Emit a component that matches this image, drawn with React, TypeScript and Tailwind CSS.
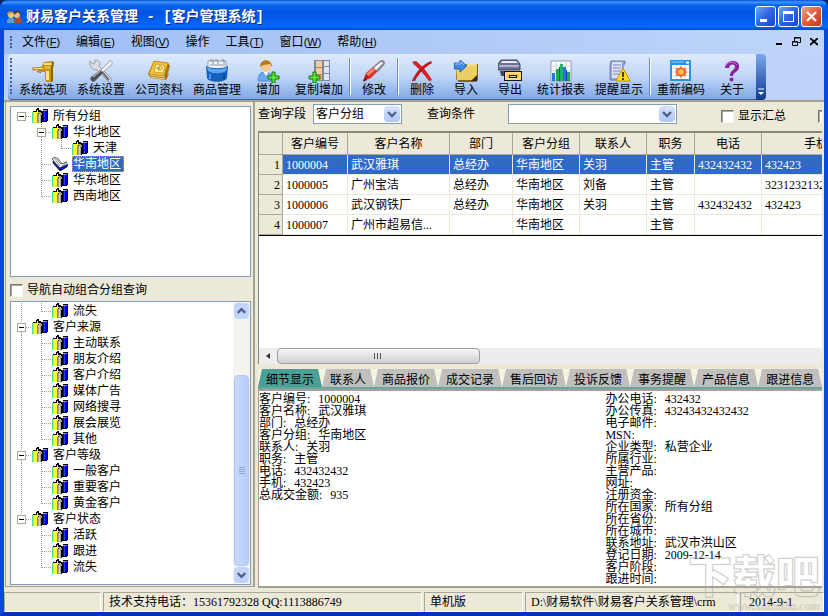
import React, { useState } from 'react';

// ==========================================
// 1. Types
// ==========================================
type Guide = 'blank' | 'line' | 'tee' | 'end' | 'box' | 'boxMid' | 'boxEnd';

interface TreeRow {
    label: string;
    guides: Guide[];
}

interface Customer {
    id: string;
    name: string;
    dept: string;
    group: string;
    contact: string;
    title: string;
    phone: string;
    mobile: string;
}

// ==========================================
// 2. Data
// ==========================================
const MENUS = [
    { label: '文件', key: 'F' },
    { label: '编辑', key: 'E' },
    { label: '视图', key: 'V' },
    { label: '操作', key: '' },
    { label: '工具', key: 'T' },
    { label: '窗口', key: 'W' },
    { label: '帮助', key: 'H' },
];

const GROUP_TREE: TreeRow[] = [
    { label: '所有分组', guides: ['box'] },
    { label: '华北地区', guides: ['blank', 'boxMid'] },
    { label: '天津', guides: ['blank', 'line', 'end'] },
    { label: '华南地区', guides: ['blank', 'tee'] },
    { label: '华东地区', guides: ['blank', 'tee'] },
    { label: '西南地区', guides: ['blank', 'end'] },
];

const NAV_TREE: TreeRow[] = [
    { label: '流失', guides: ['line', 'end'] },
    { label: '客户来源', guides: ['boxMid'] },
    { label: '主动联系', guides: ['line', 'tee'] },
    { label: '朋友介绍', guides: ['line', 'tee'] },
    { label: '客户介绍', guides: ['line', 'tee'] },
    { label: '媒体广告', guides: ['line', 'tee'] },
    { label: '网络搜寻', guides: ['line', 'tee'] },
    { label: '展会展览', guides: ['line', 'tee'] },
    { label: '其他', guides: ['line', 'end'] },
    { label: '客户等级', guides: ['boxMid'] },
    { label: '一般客户', guides: ['line', 'tee'] },
    { label: '重要客户', guides: ['line', 'tee'] },
    { label: '黄金客户', guides: ['line', 'end'] },
    { label: '客户状态', guides: ['boxEnd'] },
    { label: '活跃', guides: ['blank', 'tee'] },
    { label: '跟进', guides: ['blank', 'tee'] },
    { label: '流失', guides: ['blank', 'end'] },
];

const COLUMNS = ['客户编号', '客户名称', '部门', '客户分组', '联系人', '职务', '电话', '手机'];

const CUSTOMERS: Customer[] = [
    { id: '1000004', name: '武汉雅琪', dept: '总经办', group: '华南地区', contact: '关羽', title: '主管', phone: '432432432', mobile: '432423' },
    { id: '1000005', name: '广州宝洁', dept: '总经办', group: '华南地区', contact: '刘备', title: '主管', phone: '', mobile: '32312321323' },
    { id: '1000006', name: '武汉钢铁厂', dept: '总经办', group: '华南地区', contact: '关羽', title: '主管', phone: '432432432', mobile: '432423' },
    { id: '1000007', name: '广州市超易信...', dept: '', group: '华南地区', contact: '', title: '主管', phone: '', mobile: '' },
];

const TABS = ['细节显示', '联系人', '商品报价', '成交记录', '售后回访', '投诉反馈', '事务提醒', '产品信息', '跟进信息'];

const DETAIL_LEFT = [
    ['客户编号', '1000004'],
    ['客户名称', '武汉雅琪'],
    ['部门', '总经办'],
    ['客户分组', '华南地区'],
    ['联系人', '关羽'],
    ['职务', '主管'],
    ['电话', '432432432'],
    ['手机', '432423'],
    ['总成交金额', '935'],
];

const DETAIL_RIGHT = [
    ['办公电话', '432432'],
    ['办公传真', '43243432432432'],
    ['电子邮件', ''],
    ['MSN', ''],
    ['企业类型', '私营企业'],
    ['所属行业', ''],
    ['主营产品', ''],
    ['网址', ''],
    ['注册资金', ''],
    ['所在国家', '所有分组'],
    ['所在省份', ''],
    ['所在城市', ''],
    ['联系地址', '武汉市洪山区'],
    ['登记日期', '2009-12-14'],
    ['客户阶段', ''],
    ['跟进时间', ''],
];

// ==========================================
// 3. Icons
// ==========================================
const Icon = ({ children }: { children: React.ReactNode }) => (
    <svg viewBox="0 0 24 24" className="size-6 shrink-0" aria-hidden="true">
        {children}
    </svg>
);

const OptionsIcon = () => (
    <Icon>
        <path d="M1 9l2-1h7l2-3 1-2 9-1 1 2-1 5v13l-3 1h-4l-1-3v-7h-4l-4-2-4 1z" fill="#c4941a" />
        <path d="M13 4h8v2h-8zM3 9h9v1H3zM15 12h3v9h-3z" fill="#fbe57c" />
        <path d="M13 7h7l-1 3h-5z" fill="#e3b837" />
        <path d="M21 3h2l-1 6v13l-2 1V9z" fill="#8a6208" />
        <path d="M6 12l4 1v1l-4-1z" fill="#7d5a0a" />
    </Icon>
);

const SettingsIcon = () => (
    <Icon>
        <path d="M1 2l3 3 2-1V1c4 0 6 3 4 6l12 12c2 3-1 5-3 3L7 10C4 12 0 8 1 2z" fill="#d9dde2" stroke="#80868e" strokeWidth=".7" />
        <path d="M13 13l7 8" stroke="#6d7278" strokeWidth="2" />
        <path d="M21 1l2 2v3l-2 1-7 6-2-2 7-7z" fill="#eef1f5" stroke="#8a929b" strokeWidth=".7" />
        <path d="M11 11l3 3-8 8c-2 2-6-1-4-4z" fill="#4c5055" />
        <path d="M4 18l7-6" stroke="#b3b8be" strokeWidth="1.4" />
    </Icon>
);

const CompanyIcon = () => (
    <Icon>
        <path d="M7 2l14 2 2 3-4 14-15-2-3-4z" fill="#a87305" />
        <path d="M7 2l14 2-4 13-15-2z" fill="#efc338" stroke="#b88108" strokeWidth=".7" />
        <path d="M9 5l9 2-2 7-9-1z" fill="#fff0a4" stroke="#c18d15" strokeWidth=".7" />
        <path d="M10 10c0-3 5-3 5-1s-4 3-4 1l2-1" fill="none" stroke="#b27a05" />
        <path d="M3 16l15 2M4 18l14 2" stroke="#fff3bd" strokeWidth=".8" />
        <path d="M20 12l2 3-2 4z" fill="#54bc45" />
        <path d="M19 16l2 1-2 3z" fill="#dd3c2a" />
    </Icon>
);

const GoodsIcon = () => (
    <Icon>
        <path d="M3 2h18v10H3z" fill="#eef2f6" stroke="#798896" strokeWidth=".7" />
        <path d="M5 1h3v4M10 1h3v4M16 1h3v4M5 6h15" stroke="#74818e" fill="none" strokeWidth=".8" />
        <path d="M1 7c6 3 16 3 22 0l-1 12c-2 5-18 5-20 0z" fill="#1560bd" />
        <path d="M2 8c6 3 14 3 20 0l-1 4c-5 3-13 3-18 0z" fill="#5ba6ee" />
        <path d="M5 15v5" stroke="#4c9aea" strokeWidth="2" />
        <path d="M19 15v5" stroke="#0b4690" strokeWidth="2" />
    </Icon>
);

const AddIcon = () => (
    <Icon>
        <path d="M2 22c0-6 2-9 7-9s8 3 8 9z" fill="#6aa7ec" stroke="#3573bd" strokeWidth=".6" />
        <path d="M7 12l3 5 3-5z" fill="#fff" />
        <circle cx="10" cy="8" r="5" fill="#f6c88d" />
        <path d="M4 8c0-9 12-9 12 0l-2-3-7 1z" fill="#b8791a" />
        <path d="M16 13h3v4h4v3h-4v4h-3v-4h-4v-3h4z" fill="#5bea35" stroke="#167309" />
    </Icon>
);

const CopyAddIcon = () => (
    <Icon>
        <path d="M7 1h16v21H7z" fill="#83879a" />
        <path d="M9 2h6v6H9zM9 9h6v6H9z" fill="#f6cb98" />
        <path d="M17 2h5v5h-5zM17 8h5v6h-5zM17 15h5v6h-5z" fill="#dfe5f5" />
        <path d="M9 16h6v5H9z" fill="#f4ae64" />
        <path d="M6 13h3v4h4v3H9v4H6v-4H2v-3h4z" fill="#5bea35" stroke="#167309" />
    </Icon>
);

const EditIcon = () => (
    <Icon>
        <path d="M1 22l3-8L18 2c3-2 6 1 4 4L9 19z" fill="#d6382a" />
        <path d="M11 8l7-6c3-2 6 1 4 4l-6 7z" fill="#858c98" />
        <path d="M12 9l7-6 2 1-7 7z" fill="#fff" />
        <path d="M4 15l7-6 2 2-7 6z" fill="#ff8570" />
        <path d="M1 22l3-7 4 4z" fill="#b92419" />
        <path d="M1 23l2-4 2 2z" fill="#40251f" />
    </Icon>
);

const DeleteIcon = () => (
    <Icon>
        <path d="M3 4c7 3 12 9 18 18M21 3C13 7 7 14 3 22" stroke="#8e8da0" strokeWidth="3" fill="none" opacity=".5" />
        <path d="M2 3l4-1c5 4 11 10 16 19l-3 1C14 15 8 9 2 3z" fill="#d81f23" />
        <path d="M21 2l1 2C15 8 9 14 5 22H2C6 13 12 6 21 2z" fill="#c9141c" />
    </Icon>
);

const ImportIcon = () => (
    <Icon>
        <path d="M2 8h8l2-3h12v16l-2 2H5l-3-3z" fill="#7b671e" />
        <path d="M2 8h9l2-3h10v14l-2 2H3z" fill="#e9cd65" />
        <path d="M4 9h8l2-3h8" stroke="#fff2aa" fill="none" />
        <path d="M17 22l6-6v6z" fill="#2e290f" />
        <path d="M0 4h6V1l7 6-7 6v-3H0z" fill="#3f86e7" stroke="#1f55a6" strokeWidth=".8" />
        <path d="M1 5h6V3l3 3" stroke="#9ac9ff" fill="none" />
    </Icon>
);

const ExportIcon = () => (
    <Icon>
        <path d="M3 1h16l3 4v6H0V5z" fill="#717497" stroke="#2d2e49" strokeWidth=".8" />
        <path d="M4 2h14l2 2H3z" fill="#e8eaf6" />
        <path d="M1 7h20" stroke="#c5c9e2" strokeWidth="1.500" />
        <path d="M2 12h6v5H3z" fill="#444560" />
        <path d="M6 12h18v10H6z" fill="#161616" />
        <path d="M7 13h16v8H7z" fill="#ffbd42" />
        <path d="M8 14h14v6H8z" fill="none" stroke="#fff3ce" />
        <path d="M11 16h8v3h-8z" fill="#191919" />
        <path d="M12 17.500h6" stroke="#fff" strokeWidth=".8" />
    </Icon>
);

const ReportIcon = () => (
    <Icon>
        <path d="M2 2h20v20H2z" fill="#fff" stroke="#8f9aa6" />
        <path d="M2 7h20M2 12h20M2 17h20M7 2v20M12 2v20M17 2v20" stroke="#cbd3da" />
        <path d="M3 14h3v8H3zM14 8h3v14h-3z" fill="#2a72dd" />
        <path d="M7 10h3v12H7zM18 13h3v9h-3z" fill="#22a54d" />
        <path d="M11 5h3v17h-3z" fill="#21b26a" />
        <path d="M10 8h1v14h-1zM17 11h1v11h-1z" fill="#144ba0" />
    </Icon>
);

const RemindIcon = () => (
    <Icon>
        <path d="M4 2h14v3l-2 1v15H3V6z" fill="#9aa3d7" stroke="#6670a9" strokeWidth=".8" />
        <path d="M5 3h10v16H5z" fill="#dde1fa" />
        <path d="M6 6h8M6 9h8M6 12h8M6 15h6" stroke="#7c86c2" />
        <path d="M16 9l7 13H9z" fill="#ffe21c" stroke="#c39500" />
        <path d="M16 13v5M16 19v2" stroke="#1c1700" strokeWidth="1.600" />
    </Icon>
);

const RecodeIcon = () => (
    <Icon>
        <path d="M1 1h21v21H1z" fill="#2595e9" />
        <path d="M3 6h17v14H3z" fill="#fff" />
        <path d="M2 3h13" stroke="#8ed3ff" />
        <path d="M17 3.500h3" stroke="#fff" strokeWidth="2" />
        <path d="M3 9h17M3 13h17M3 17h17M7 6v14M12 6v14M16 6v14" stroke="#bfd1e4" strokeWidth=".7" />
        <path d="M12 7l2 2h3v3l1 1-1 1v3h-3l-2 2-2-2H7v-3l-1-1 1-1V9h3z" fill="#f2733d" />
        <circle cx="12" cy="13" r="2.500" fill="#ffca45" />
    </Icon>
);

const AboutIcon = () => (
    <Icon>
        <path d="M5 9c0-9 15-9 14-1 0 5-6 5-6 9h-3c0-6 5-6 5-9 0-4-6-3-6 1z" fill="#8a22a0" />
        <path d="M6 7c1-5 9-5 11-1" stroke="#cf74dd" fill="none" />
        <circle cx="11.500" cy="20.500" r="2" fill="#8a22a0" />
    </Icon>
);

const BooksIcon = () => (
    <svg viewBox="0 0 16 16" className="size-4 shrink-0" shapeRendering="crispEdges" aria-hidden="true">
        <path d="M1 3h3V1h1V0h2v2h2v1h2V1h5v12h-1v1h-5v1H1z" fill="#000" />
        <path d="M0 4h1v11H0z" fill="#3fe0a0" />
        <path d="M1 4h1v11H1z" fill="#b9f56c" />
        <path d="M2 4h3V2h1v2h1v1H6v10H2z" fill="#ffff20" />
        <path d="M5 6h1v9H5z" fill="#8d8a50" />
        <path d="M6 6h1V4h2v1h1v2H9v8H6z" fill="#a9a397" />
        <path d="M7 6h1v9H7z" fill="#d6d0c4" />
        <path d="M11 3h4v10h-4z" fill="#0000d8" />
        <path d="M11 2h4v1h-4z" fill="#8f97d8" />
        <path d="M12 3h1v10h-1z" fill="#2a35ff" />
    </svg>
);

const OpenBookIcon = () => (
    <svg viewBox="0 0 16 16" className="size-4 shrink-0" aria-hidden="true">
        <path d="M1 5l7 7 8-4-1 3-7 4-7-8z" fill="#0a1a96" stroke="#000040" strokeWidth=".6" />
        <path d="M0 3l3-2 6 7 6-2-7 6z" fill="#fff" stroke="#222" strokeWidth=".7" />
        <path d="M2 2l6 8M5 1l5 7" stroke="#555" strokeWidth=".7" />
    </svg>
);

const AppIcon = () => (
    <svg viewBox="0 0 16 16" className="size-4 shrink-0" aria-hidden="true">
        <path d="M1 14c0-4 1-5 4-5s4 2 4 5z" fill="#5aa0c8" />
        <path d="M8 14c0-4 1-6 4-6s4 2 4 6z" fill="#b04a28" />
        <circle cx="5" cy="6" r="3" fill="#f4c68e" />
        <path d="M1 6c0-5 7-5 7 0L6 4z" fill="#c49a2a" />
        <circle cx="11" cy="6" r="3" fill="#eab98a" />
        <path d="M8 6c0-6 7-5 7 0l-3-3z" fill="#5a3418" />
    </svg>
);

const Chevron = ({ up = false }: { up?: boolean }) => (
    <svg viewBox="0 0 16 16" className="size-4" aria-hidden="true">
        <path d={up ? 'M4 10l4-4 4 4' : 'M4 6l4 4 4-4'} fill="none" stroke="#4d6185" strokeWidth="2.400" />
    </svg>
);

const TOOLS = [
    { label: '系统选项', icon: <OptionsIcon /> },
    { label: '系统设置', icon: <SettingsIcon /> },
    { label: '公司资料', icon: <CompanyIcon /> },
    { label: '商品管理', icon: <GoodsIcon /> },
    { label: '增加', icon: <AddIcon /> },
    { label: '复制增加', icon: <CopyAddIcon />, split: true },
    { label: '修改', icon: <EditIcon />, split: true },
    { label: '删除', icon: <DeleteIcon /> },
    { label: '导入', icon: <ImportIcon /> },
    { label: '导出', icon: <ExportIcon /> },
    { label: '统计报表', icon: <ReportIcon /> },
    { label: '提醒显示', icon: <RemindIcon />, split: true },
    { label: '重新编码', icon: <RecodeIcon /> },
    { label: '关于', icon: <AboutIcon /> },
];

// ==========================================
// 4. Parts
// ==========================================
const GUIDE_PATHS: Record<Guide, string> = {
    blank: '',
    line: 'M9.5 0v16',
    tee: 'M9.5 0v16M10 8.5h10',
    end: 'M9.5 0v9M10 8.5h10',
    box: 'M14 8.5h6',
    boxMid: 'M9.5 0v4M9.5 13v3M14 8.5h6',
    boxEnd: 'M9.5 0v4M14 8.5h6',
};

const GuideCell = ({ kind }: { kind: Guide }) => (
    <svg viewBox="0 0 20 16" className="h-4 w-5 shrink-0" aria-hidden="true">
        <path d={GUIDE_PATHS[kind]} stroke="#9c9a94" strokeDasharray="1 1" fill="none" />
        {kind.startsWith('box') && (
            <g shapeRendering="crispEdges">
                <path d="M5.5 4.5h8v8h-8z" fill="#fff" stroke="#aca899" />
                <path d="M7 8.5h5" stroke="#000" />
            </g>
        )}
    </svg>
);

interface TreeProps {
    name: string;
    rows: TreeRow[];
    selected?: string;
}

const Tree = ({ name, rows, selected }: TreeProps) => (
    <ul role="tree" aria-label={name} className="min-w-0 flex-1 pt-px pl-px">
        {rows.map((row, i) => {
            const active = row.label === selected;
            return (
                <li key={i} role="treeitem" aria-selected={active} className="flex h-4 items-center">
                    {row.guides.map((g, j) => (
                        <GuideCell key={j} kind={g} />
                    ))}
                    {active ? <OpenBookIcon /> : <BooksIcon />}
                    <span
                        className={
                            active
                                ? 'ml-1 border border-dotted border-[#d8a050] bg-[#316ac5] pr-0.5 leading-[14px] text-white'
                                : 'ml-[5px] leading-4'
                        }
                    >
                        {row.label}
                    </span>
                </li>
            );
        })}
    </ul>
);

const Field = ({ label, value }: { label: string; value: string }) => (
    <div className="flex h-3 gap-2 leading-3 whitespace-nowrap">
        <dt>{label}:</dt>
        <dd>{value}</dd>
    </div>
);

const ComboArrow = () => (
    <span className="pointer-events-none absolute top-0.5 right-0.5 flex h-4 w-4 items-center justify-center rounded-sm bg-gradient-to-b from-[#d6e3fd] to-[#afc5f4]">
        <Chevron />
    </span>
);

const checkboxClass =
    'size-[13px] shrink-0 appearance-none border border-t-[#7b7973] border-l-[#7b7973] border-r-[#f7f5ec] border-b-[#f7f5ec] bg-white shadow-[inset_1px_1px_0_#a8a599] checked:bg-[#316ac5]';

// ==========================================
// 5. Main window
// ==========================================
const App: React.FC = () => {
    const [activeTab, setActiveTab] = useState(TABS[0]);
    const [selectedRow, setSelectedRow] = useState(0);

    return (
        <div className="relative flex min-h-screen flex-col overflow-hidden bg-[#0a246a] font-['Liberation_Serif','Noto_Sans_CJK_SC',serif] text-xs text-black">
            {/* Title bar */}
            <header className="flex h-[30px] shrink-0 items-center rounded-t-lg bg-[linear-gradient(180deg,#0b4fd0_0%,#3d95ff_7%,#0a62ec_18%,#0054e3_45%,#0562f5_75%,#0668fb_90%,#0046c8_100%)] pt-[3px] pr-1.5 pl-1.5">
                <AppIcon />
                <h1 className="ml-1 flex-1 font-['Liberation_Mono','Noto_Sans_CJK_SC',monospace] text-sm font-bold whitespace-nowrap text-white [text-shadow:1px_1px_0_#0a2a80]">
                    财易客户关系管理 - [客户管理系统]
                </h1>
                <div className="flex gap-0.5">
                    <button type="button" aria-label="最小化" className="size-[21px] rounded-[3px] border border-white bg-gradient-to-br from-[#7ba0f8] via-[#2f62e0] to-[#1a48cc]">
                        <svg viewBox="0 0 19 19" aria-hidden="true">
                            <path d="M4 12h7v3H4z" fill="#fff" />
                        </svg>
                    </button>
                    <button type="button" aria-label="最大化" className="size-[21px] rounded-[3px] border border-white bg-gradient-to-br from-[#7ba0f8] via-[#2f62e0] to-[#1a48cc]">
                        <svg viewBox="0 0 19 19" aria-hidden="true">
                            <path d="M4 4h11v11H4zM5 7v7h9V7z" fill="#fff" fillRule="evenodd" />
                        </svg>
                    </button>
                    <button type="button" aria-label="关闭" className="size-[21px] rounded-[3px] border border-white bg-gradient-to-br from-[#f0a08a] via-[#e05a38] to-[#c53a18]">
                        <svg viewBox="0 0 19 19" aria-hidden="true">
                            <path d="M5 5l9 9M14 5l-9 9" stroke="#fff" strokeWidth="2.200" />
                        </svg>
                    </button>
                </div>
            </header>

            <div className="flex flex-1 flex-col border-x-4 border-b-4 border-[#0a48dc] border-b-[#0831c0]">
                {/* Menu bar */}
                <nav className="flex h-6 shrink-0 items-center bg-gradient-to-r from-[#9fbef5] to-[#bfd5f9] pr-1.5 pl-1.5">
                    <span className="h-3 border-l-2 border-dotted border-[#3f5f9f]" />
                    <ul className="ml-2.5 flex flex-1 gap-4">
                        {MENUS.map((m) => (
                            <li key={m.label}>
                                <button type="button" className="whitespace-nowrap">
                                    {m.label}
                                    {m.key && (
                                        <span className="font-['Liberation_Sans',sans-serif] text-[11px]">
                                            (<u>{m.key}</u>)
                                        </span>
                                    )}
                                </button>
                            </li>
                        ))}
                    </ul>
                    <div className="flex gap-2">
                        <button type="button" aria-label="最小化子窗口" className="size-2">
                            <svg viewBox="0 0 8 8" aria-hidden="true">
                                <path d="M0 5h6v2H0z" />
                            </svg>
                        </button>
                        <button type="button" aria-label="还原子窗口" className="size-2">
                            <svg viewBox="0 0 8 8" aria-hidden="true" className="overflow-visible">
                                <path d="M2.5 3V-.5h6v5H6M.5 3.500h5v4h-5zM2 0h6M1 4h5" fill="none" stroke="#000" />
                            </svg>
                        </button>
                        <button type="button" aria-label="关闭子窗口" className="ml-0.5 size-2">
                            <svg viewBox="0 0 8 8" aria-hidden="true">
                                <path d="M0 0l8 7M8 0L0 7" stroke="#000" strokeWidth="1.700" />
                            </svg>
                        </button>
                    </div>
                </nav>

                {/* Tool bar */}
                <div className="flex h-[46px] shrink-0 bg-[#bdd3f8] pl-1">
                    <div role="toolbar" aria-label="工具栏" className="flex rounded-l border-b border-[#3f649f] bg-gradient-to-b from-[#dfeafc] via-[#c0d6f7] to-[#80a8e6] pr-0.5 pl-0.5">
                        <span className="mt-1 mr-0.5 h-9 border-l-2 border-dotted border-[#3f5f9f]" />
                        {TOOLS.map((t) => (
                            <React.Fragment key={t.label}>
                                <button
                                    type="button"
                                    className={`flex shrink-0 flex-col items-center pt-[5px] leading-[14px] whitespace-nowrap ${t.label.length > 2 ? 'w-[58px]' : 'w-11'}`}
                                >
                                    {t.icon}
                                    {t.label}
                                </button>
                                {t.split && <span className="mx-px my-1 w-0.5 border-r border-l border-l-[#6a8ccb] border-r-white" />}
                            </React.Fragment>
                        ))}
                    </div>
                    <button type="button" aria-label="工具栏选项" className="flex w-2.5 items-end justify-center rounded-r bg-gradient-to-b from-[#7da7ea] to-[#0a3a93] pb-1">
                        <svg viewBox="0 0 6 8" className="h-2 w-1.5" aria-hidden="true">
                            <path d="M0 1h6" stroke="#fff" />
                            <path d="M0 4h6L3 7z" fill="#fff" />
                        </svg>
                    </button>
                </div>

                {/* Work area */}
                <main className="flex flex-1 border-t-2 border-[#a5a295] bg-[#ece9d8]">
                    <aside className="m-px mt-0 flex w-[250px] shrink-0 flex-col border-r-2 border-b border-l border-[#a5a295] pt-1 pr-0.5 pl-1">
                        <div className="flex h-[171px] shrink-0 border border-[#7f9db9] bg-white">
                            <Tree name="客户分组" rows={GROUP_TREE} selected="华南地区" />
                        </div>
                        <label className="flex h-6 shrink-0 items-center gap-1 pt-0.5">
                            <input type="checkbox" className={checkboxClass} />
                            导航自动组合分组查询
                        </label>
                        <div className="mb-px flex flex-1 border border-[#7f9db9] bg-white">
                            <Tree name="客户导航" rows={NAV_TREE} />
                            <div className="flex w-[17px] flex-col bg-[#f4f3ee] px-px">
                                <button type="button" aria-label="向上滚动" className="mt-px flex h-4 items-center justify-center rounded-sm bg-[#c2d3fc]">
                                    <Chevron up />
                                </button>
                                <div className="h-14 shrink-0" />
                                <div className="flex flex-1 flex-col items-center justify-center gap-px rounded-sm border border-[#b0c4f2] bg-gradient-to-r from-[#cad8fd] to-[#b8ccfb]">
                                    <span className="h-px w-1.5 bg-[#8ca6e0]" />
                                    <span className="h-px w-1.5 bg-[#8ca6e0]" />
                                    <span className="h-px w-1.5 bg-[#8ca6e0]" />
                                    <span className="h-px w-1.5 bg-[#8ca6e0]" />
                                </div>
                                <button type="button" aria-label="向下滚动" className="my-px flex h-4 items-center justify-center rounded-sm bg-[#c2d3fc]">
                                    <Chevron />
                                </button>
                            </div>
                        </div>
                    </aside>

                    <section className="mr-0.5 flex min-w-0 flex-1 flex-col pl-0.5">
                        {/* Query row */}
                        <form className="flex h-[29px] shrink-0 items-start overflow-hidden pt-0.5 whitespace-nowrap">
                            <label htmlFor="field" className="w-[55px] leading-5">查询字段</label>
                            <div className="relative w-[89px]">
                                <select id="field" className="h-5 w-full appearance-none border border-[#7f9db9] bg-white pl-0.5 leading-4">
                                    <option>客户分组</option>
                                    <option>客户名称</option>
                                </select>
                                <ComboArrow />
                            </div>
                            <label htmlFor="cond" className="ml-[25px] w-[81px] leading-5">查询条件</label>
                            <div className="relative w-[169px]">
                                <select id="cond" className="h-5 w-full appearance-none border border-[#7f9db9] bg-white pl-0.5">
                                    <option></option>
                                </select>
                                <ComboArrow />
                            </div>
                            <label className="ml-11 flex h-6 items-center gap-1">
                                <input type="checkbox" className={checkboxClass} />
                                显示汇总
                            </label>
                            <span className="ml-auto flex h-6 w-1 items-center overflow-hidden">
                                <input type="checkbox" aria-label="更多" className={checkboxClass} />
                            </span>
                        </form>

                        {/* Customer list */}
                        <div className="flex flex-1 flex-col overflow-hidden border-t-2 border-l border-[#8a887d] bg-white">
                            <div className="flex-1">
                                <table className="w-[612px] table-fixed border-separate border-spacing-0 border-b border-black whitespace-nowrap">
                                    <colgroup>
                                        <col className="w-6" />
                                        <col className="w-[65px]" />
                                        <col className="w-[102px]" />
                                        <col className="w-[63px]" />
                                        <col className="w-[67px]" />
                                        <col className="w-[67px]" />
                                        <col className="w-12" />
                                        <col className="w-[67px]" />
                                        <col className="w-[109px]" />
                                    </colgroup>
                                    <thead>
                                        <tr className="h-[22px] bg-[#ece9d8]">
                                            <th className="border-r border-b border-[#aca899]" />
                                            {COLUMNS.map((c) => (
                                                <th key={c} className="border-r border-b border-[#aca899] font-normal">{c}</th>
                                            ))}
                                        </tr>
                                    </thead>
                                    <tbody>
                                        {CUSTOMERS.map((c, i) => (
                                            <tr
                                                key={c.id}
                                                onClick={() => setSelectedRow(i)}
                                                className={i === selectedRow ? 'h-5 bg-[#316ac5] text-white' : 'h-5'}
                                            >
                                                <th className="border-r border-b border-[#aca899] bg-[#ece9d8] pr-0.5 text-right font-normal text-black">{i + 1}</th>
                                                {[c.id, c.name, c.dept, c.group, c.contact, c.title, c.phone, c.mobile].map((v, j) => (
                                                    <td key={j} className="border-r border-b border-[#ece9d8] pl-[3px] leading-4">{v}</td>
                                                ))}
                                            </tr>
                                        ))}
                                    </tbody>
                                </table>
                            </div>
                            <div className="flex h-4 shrink-0 bg-[#ededed]">
                                <button type="button" aria-label="向左滚动" className="flex w-[18px] items-center justify-center">
                                    <svg viewBox="0 0 6 6" className="size-1.5" aria-hidden="true">
                                        <path d="M5 0v6L1 3z" fill="#333" />
                                    </svg>
                                </button>
                                <div className="flex w-[36%] items-center justify-center gap-px rounded-sm border border-[#a0a0a0] bg-gradient-to-b from-[#f7f7f7] to-[#cfcfd2]">
                                    <span className="h-1.5 w-0.5 border-l border-[#555]" />
                                    <span className="h-1.5 w-0.5 border-l border-[#555]" />
                                    <span className="h-1.5 w-0.5 border-l border-[#555]" />
                                </div>
                            </div>
                        </div>

                        {/* Detail tabs */}
                        <div role="tablist" className="mt-[5px] flex h-5 shrink-0 overflow-hidden border-b-2 border-[#6aa3a8] bg-[#f5f2dd]">
                            {TABS.map((t) => (
                                <button
                                    key={t}
                                    type="button"
                                    role="tab"
                                    aria-selected={t === activeTab}
                                    onClick={() => setActiveTab(t)}
                                    className={`shrink-0 px-2 pt-1 leading-[14px] whitespace-nowrap [clip-path:polygon(4px_0,calc(100%-4px)_0,100%_100%,0_100%)] ${t === activeTab ? 'bg-[#4aa096]' : 'bg-[#c0bfbd]'}`}
                                >
                                    {t}
                                </button>
                            ))}
                        </div>
                        <div className="grid shrink-0 grid-cols-[8fr_5fr] border-t-2 border-b-2 border-l border-[#a5a295] bg-white pt-0.5 pb-px">
                            <dl>
                                {DETAIL_LEFT.map(([label, value]) => (
                                    <Field key={label} label={label} value={value} />
                                ))}
                            </dl>
                            <dl>
                                {DETAIL_RIGHT.map(([label, value]) => (
                                    <Field key={label} label={label} value={value} />
                                ))}
                            </dl>
                        </div>
                    </section>
                </main>

                {/* Status bar */}
                <footer className="flex h-6 shrink-0 gap-0.5 bg-[#ece9d8] pt-1 leading-[18px] whitespace-nowrap">
                    <span className="w-[97px] border border-t-[#aca899] border-r-white border-b-white border-l-[#aca899]" />
                    <span className="w-[319px] border border-t-[#aca899] border-r-white border-b-white border-l-[#aca899] pl-[5px]">
                        技术支持电话：15361792328 QQ:1113886749
                    </span>
                    <span className="w-[99px] border border-t-[#aca899] border-r-white border-b-white border-l-[#aca899] pl-[5px]">单机版</span>
                    <span className="w-[213px] border border-t-[#aca899] border-r-white border-b-white border-l-[#aca899] pl-[5px]">
                        D:\财易软件\财易客户关系管理\crm
                    </span>
                    <span className="flex-1 border border-t-[#aca899] border-r-white border-b-white border-l-[#aca899] pl-2">2014-9-1</span>
                </footer>
            </div>

            {/* Watermark laid over the lower right corner */}
            <div className="pointer-events-none absolute right-2 bottom-1 flex flex-col items-end gap-1 opacity-60">
                <span className="font-['Noto_Sans_CJK_SC',sans-serif] text-[44px] leading-[44px] font-black text-transparent [-webkit-text-stroke:1px_#a8a8a8]">下载吧</span>
                <span className="text-xs leading-3 font-bold text-[#c4c1b4] italic">www.xiazaiba.com</span>
            </div>
        </div>
    );
};

export default App;
